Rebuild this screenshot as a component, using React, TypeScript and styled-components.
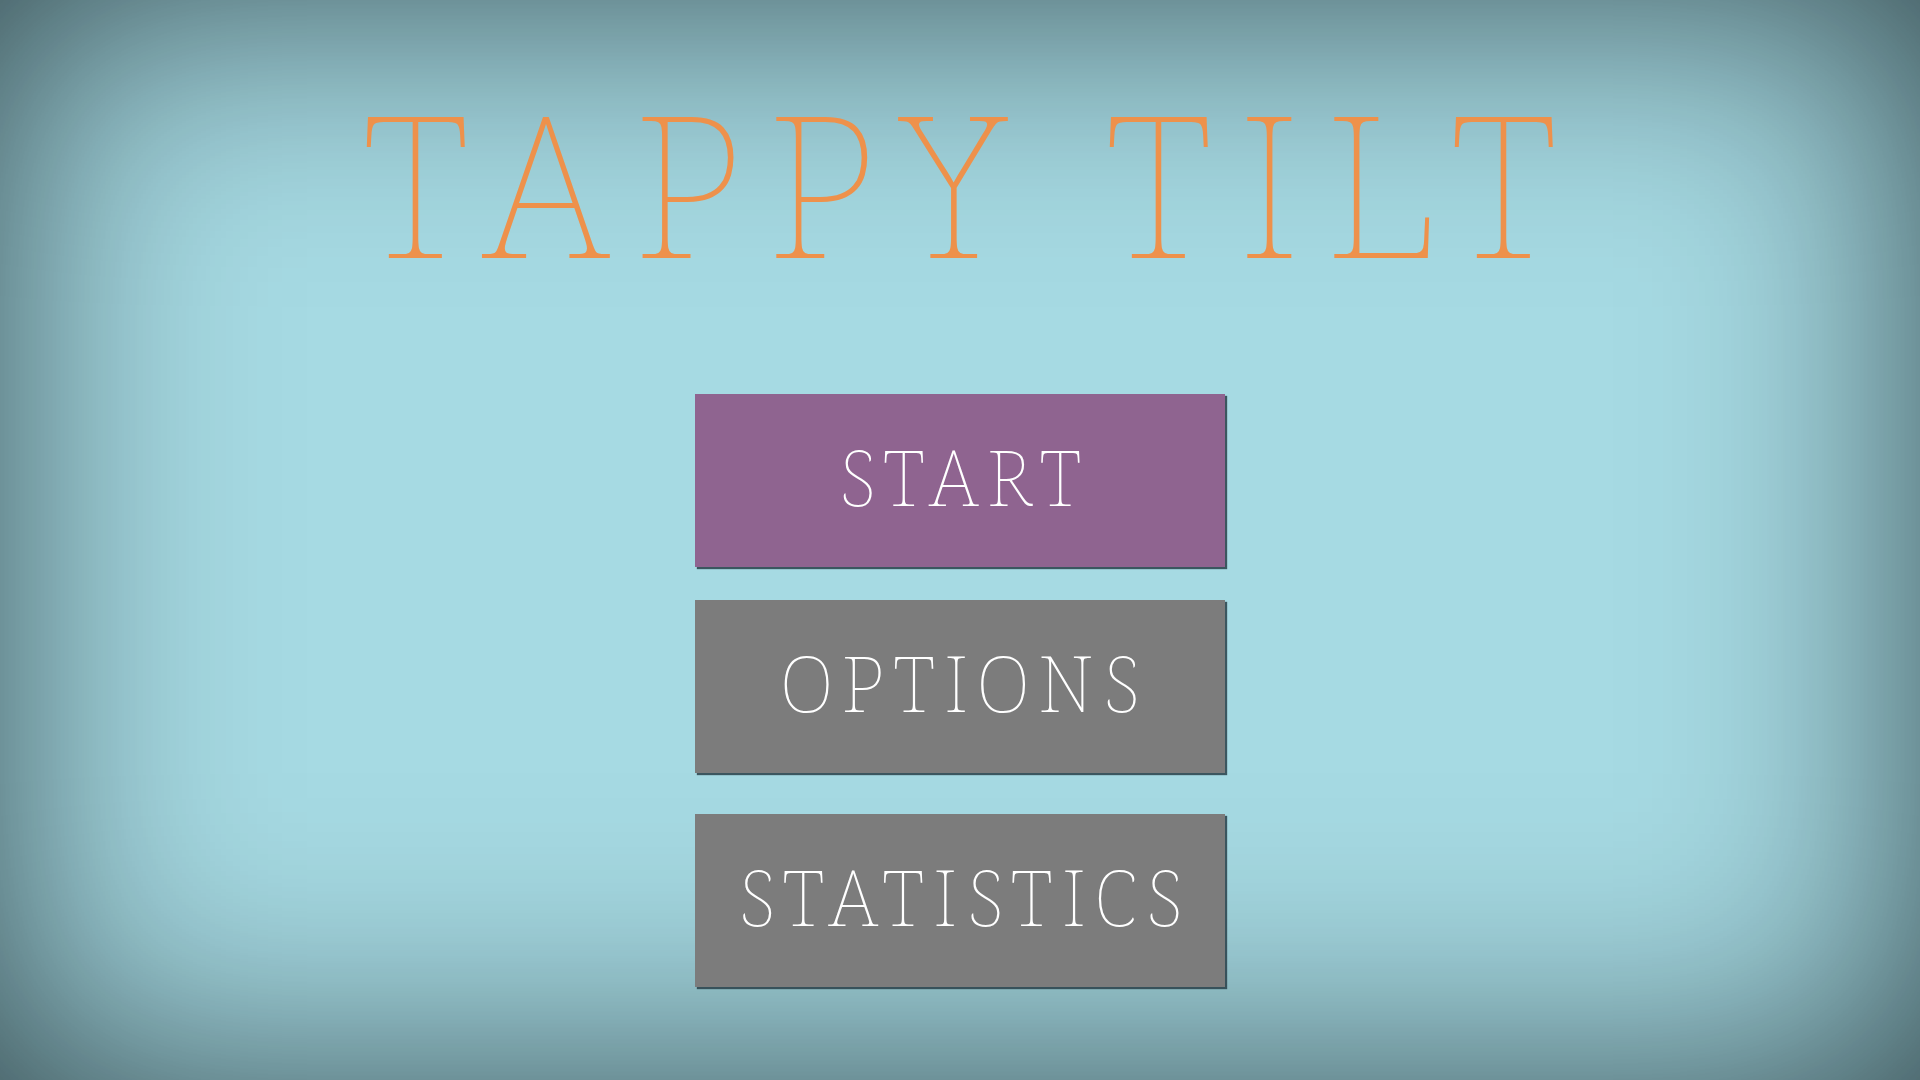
import React from "react";
import styled, { createGlobalStyle } from "styled-components";

const GlobalStyle = createGlobalStyle`
  html, body {
    margin: 0;
    padding: 0;
    height: 100%;
    overflow: hidden;
  }
  body {
    background: #a6dae3;
  }
  #root {
    height: 100%;
  }
`;

const Screen = styled.main`
  box-sizing: border-box;
  width: 100vw;
  height: 100vh;
  display: flex;
  flex-direction: column;
  align-items: center;
  padding-top: 83px;
  background: #a6dae3;
  box-shadow: inset 0 0 420px rgba(0, 8, 10, 0.68);
  font-family: "Noto Serif", "DejaVu Serif", serif;
`;

const Title = styled.h1`
  margin: 0 -23px 0 0;
  font-family: "Noto Serif", "DejaVu Serif", serif;
  font-weight: 150;
  font-size: 197px;
  line-height: 197px;
  height: 197px;
  letter-spacing: 23px;
  color: #ee914b;
  white-space: nowrap;
`;

const Menu = styled.nav`
  display: flex;
  flex-direction: column;
  align-items: center;
  margin-top: 114px;
`;

const MenuButton = styled.button<{ $bg: string; $gapBefore: number }>`
  box-sizing: border-box;
  width: 530px;
  height: 173px;
  margin-top: ${(p) => p.$gapBefore}px;
  padding: 0 0 9px;
  border: 0;
  border-radius: 0;
  display: flex;
  align-items: center;
  justify-content: center;
  background: ${(p) => p.$bg};
  box-shadow: 2px 2px 1px rgba(40, 62, 72, 0.85);
  color: #ffffff;
  font-family: "Noto Serif", "DejaVu Serif", serif;
  font-weight: 100;
  font-size: 77px;
  line-height: 1;
  letter-spacing: 8px;
  cursor: pointer;
`;

const Label = styled.span`
  display: block;
  margin-right: -8px;
`;

const items = [
  { label: "START", bg: "#8f6490", gap: 0 },
  { label: "OPTIONS", bg: "#7c7c7c", gap: 33 },
  { label: "STATISTICS", bg: "#7c7c7c", gap: 41 },
];

export default function App() {
  return (
    <>
      <GlobalStyle />
      <Screen>
        <Title>TAPPY TILT</Title>
        <Menu>
          {items.map((it) => (
            <MenuButton key={it.label} $bg={it.bg} $gapBefore={it.gap}>
              <Label>{it.label}</Label>
            </MenuButton>
          ))}
        </Menu>
      </Screen>
    </>
  );
}
